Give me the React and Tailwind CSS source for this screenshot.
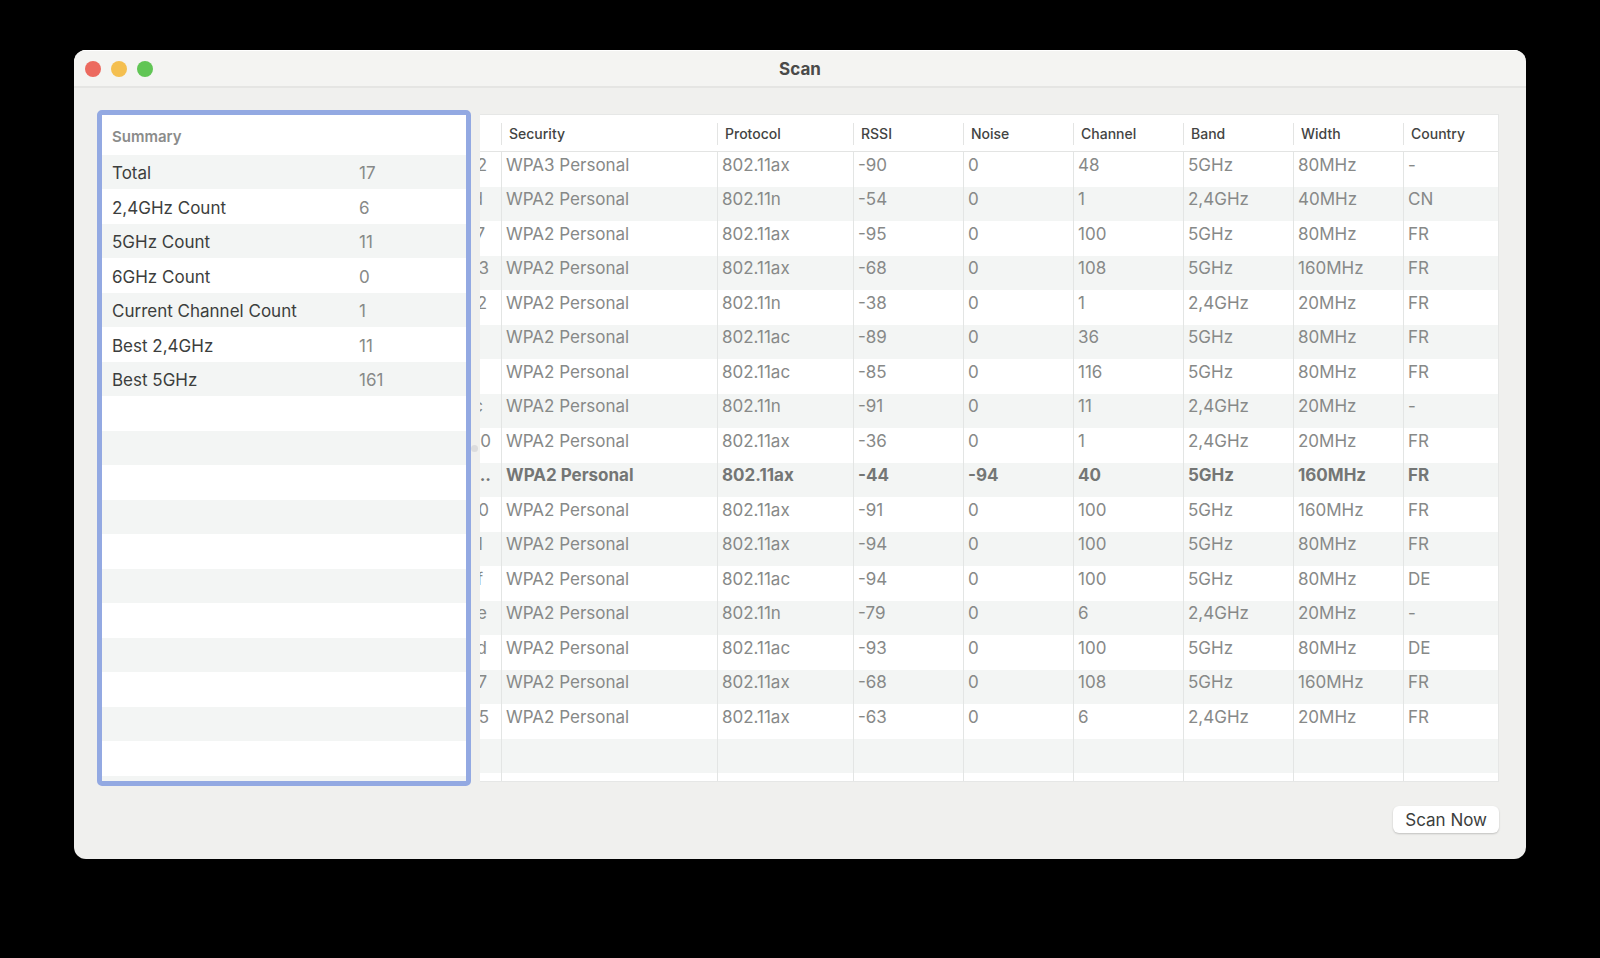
import React from "react";

const summary = [
  { label: "Total", value: "17" },
  { label: "2,4GHz Count", value: "6" },
  { label: "5GHz Count", value: "11" },
  { label: "6GHz Count", value: "0" },
  { label: "Current Channel Count", value: "1" },
  { label: "Best 2,4GHz", value: "11" },
  { label: "Best 5GHz", value: "161" },
];

const SUMMARY_ROWS = 18;

const columns = [
  { title: "Security", width: "w-[216px]" },
  { title: "Protocol", width: "w-[136px]" },
  { title: "RSSI", width: "w-[110px]" },
  { title: "Noise", width: "w-[110px]" },
  { title: "Channel", width: "w-[110px]" },
  { title: "Band", width: "w-[110px]" },
  { title: "Width", width: "w-[110px]" },
  { title: "Country", width: "" },
];

// tail = what is still visible of the BSSID column, pad = space after it
const networks = [
  { tail: "2", pad: "pr-3.5", cells: ["WPA3 Personal", "802.11ax", "-90", "0", "48", "5GHz", "80MHz", "-"] },
  { tail: "d", pad: "pr-4.5", cells: ["WPA2 Personal", "802.11n", "-54", "0", "1", "2,4GHz", "40MHz", "CN"] },
  { tail: "7", pad: "pr-4", cells: ["WPA2 Personal", "802.11ax", "-95", "0", "100", "5GHz", "80MHz", "FR"] },
  { tail: "3", pad: "pr-3", cells: ["WPA2 Personal", "802.11ax", "-68", "0", "108", "5GHz", "160MHz", "FR"] },
  { tail: "2", pad: "pr-3.5", cells: ["WPA2 Personal", "802.11n", "-38", "0", "1", "2,4GHz", "20MHz", "FR"] },
  { tail: "", pad: "pr-4", cells: ["WPA2 Personal", "802.11ac", "-89", "0", "36", "5GHz", "80MHz", "FR"] },
  { tail: "", pad: "pr-4", cells: ["WPA2 Personal", "802.11ac", "-85", "0", "116", "5GHz", "80MHz", "FR"] },
  { tail: "c", pad: "pr-4.5", cells: ["WPA2 Personal", "802.11n", "-91", "0", "11", "2,4GHz", "20MHz", "-"] },
  { tail: "0", pad: "pr-2.5", cells: ["WPA2 Personal", "802.11ax", "-36", "0", "1", "2,4GHz", "20MHz", "FR"] },
  { tail: "..", pad: "pr-2.5", current: true, cells: ["WPA2 Personal", "802.11ax", "-44", "-94", "40", "5GHz", "160MHz", "FR"] },
  { tail: "0", pad: "pr-3", cells: ["WPA2 Personal", "802.11ax", "-91", "0", "100", "5GHz", "160MHz", "FR"] },
  { tail: "1", pad: "pr-4.5", cells: ["WPA2 Personal", "802.11ax", "-94", "0", "100", "5GHz", "80MHz", "FR"] },
  { tail: "f", pad: "pr-4.5", cells: ["WPA2 Personal", "802.11ac", "-94", "0", "100", "5GHz", "80MHz", "DE"] },
  { tail: "e", pad: "pr-3.5", cells: ["WPA2 Personal", "802.11n", "-79", "0", "6", "2,4GHz", "20MHz", "-"] },
  { tail: "d", pad: "pr-3.5", cells: ["WPA2 Personal", "802.11ac", "-93", "0", "100", "5GHz", "80MHz", "DE"] },
  { tail: "7", pad: "pr-3.5", cells: ["WPA2 Personal", "802.11ax", "-68", "0", "108", "5GHz", "160MHz", "FR"] },
  { tail: "5", pad: "pr-3", cells: ["WPA2 Personal", "802.11ax", "-63", "0", "6", "2,4GHz", "20MHz", "FR"] },
];

const TitleBar = () => (
  <header className="grid grid-cols-[1fr_auto_1fr] items-center h-[38px] px-[11px] bg-[#f4f4f2] border-t border-t-white border-b-2 border-b-[#e5e5e3]">
    <div className="flex gap-[10px]">
      <button aria-label="Close" className="size-4 rounded-full bg-[#ec6a5f]" />
      <button aria-label="Minimize" className="size-4 rounded-full bg-[#f4bf50]" />
      <button aria-label="Zoom" className="size-4 rounded-full bg-[#61c555]" />
    </div>
    <h1 className="text-[17px] leading-5 font-bold text-[#4a4a49]">Scan</h1>
  </header>
);

const SummaryTable = () => {
  const rows = Array.from({ length: SUMMARY_ROWS }, (_, i) => summary[i]);

  return (
    <section className="w-[374px] shrink-0 border-[5px] border-[#93a9e2] rounded-[5px] bg-white">
      <table className="w-full table-fixed border-separate border-spacing-0 text-left text-[17px] leading-5">
        <thead>
          <tr className="h-10">
            <th className="w-[257px] pl-[10px] pt-1 text-[15px] font-semibold text-[#8b8c8b]">
              Summary
            </th>
            <th />
          </tr>
        </thead>
        <tbody>
          {rows.map((row, index) => (
            <tr key={index} className="h-[35px] odd:h-[34px] odd:bg-[#f3f5f4]">
              <td className="pl-[10px] pt-0.5 text-[#3c3e3d]">{row?.label}</td>
              <td className="pt-0.5 text-[#878988]">{row?.value}</td>
            </tr>
          ))}
          <tr className="h-[5px] bg-[#f3f5f4]">
            <td />
            <td />
          </tr>
        </tbody>
      </table>
    </section>
  );
};

const NetworkTable = () => (
  <section className="flex-1 min-w-0 my-1 overflow-hidden border-y border-r border-[#e6e7e6] bg-white">
    <table className="w-full table-fixed border-separate border-spacing-0 text-left text-[17px] leading-5 whitespace-nowrap">
      <thead>
        <tr className="h-[37px]">
          <th className="w-[21px] border-b border-[#e3e4e3]" />
          {columns.map((col) => (
            <th
              key={col.title}
              className={`${col.width} pt-0.5 border-b border-[#e3e4e3] text-sm font-medium text-[#434443]`}
            >
              <div className="flex items-center h-[22px] pl-[7px] border-l border-[#e3e4e3]">
                {col.title}
              </div>
            </th>
          ))}
        </tr>
      </thead>
      <tbody>
        {networks.map((net, index) => (
          <tr
            key={index}
            className={`h-[35px] even:h-[34px] even:bg-[#f3f5f4] ${net.current ? "font-bold text-[#747675]" : "text-[#878988]"}`}
          >
            <td className="pb-2.5">
              <div className={`flex justify-end overflow-hidden ${net.pad}`}>
                {net.tail}
              </div>
            </td>
            {net.cells.map((cell, i) => (
              <td key={i} className="pl-1 pb-2.5 border-l border-[#e3e5e4]">
                {cell}
              </td>
            ))}
          </tr>
        ))}
        <tr className="h-[34px] bg-[#f3f5f4]">
          <td />
          {columns.map((col) => (
            <td key={col.title} className="border-l border-[#e3e5e4]" />
          ))}
        </tr>
        <tr className="h-2">
          <td />
          {columns.map((col) => (
            <td key={col.title} className="border-l border-[#e3e5e4]" />
          ))}
        </tr>
      </tbody>
    </table>
  </section>
);

const App = () => {
  return (
    <div className="min-h-screen bg-black px-[74px] py-[50px] font-['Inter',sans-serif]">
      <main className="overflow-hidden rounded-xl bg-[#f0f0ee]">
        <TitleBar />
        <div className="pt-[22px] pb-[26px] pl-[23px] pr-[27px]">
          <div className="flex">
            <SummaryTable />
            {/* split view handle */}
            <div className="flex items-center w-[9px] shrink-0">
              <div className="size-[7px] rounded-full bg-[#dcdcdd]" />
            </div>
            <NetworkTable />
          </div>
          <div className="flex justify-end pt-5">
            <button className="h-[27px] px-3 rounded-md bg-white text-[17px] leading-5 text-[#3c3e3d] shadow-[0_1px_2px_rgba(0,0,0,0.2)]">
              Scan Now
            </button>
          </div>
        </div>
      </main>
    </div>
  );
};

export default App;
